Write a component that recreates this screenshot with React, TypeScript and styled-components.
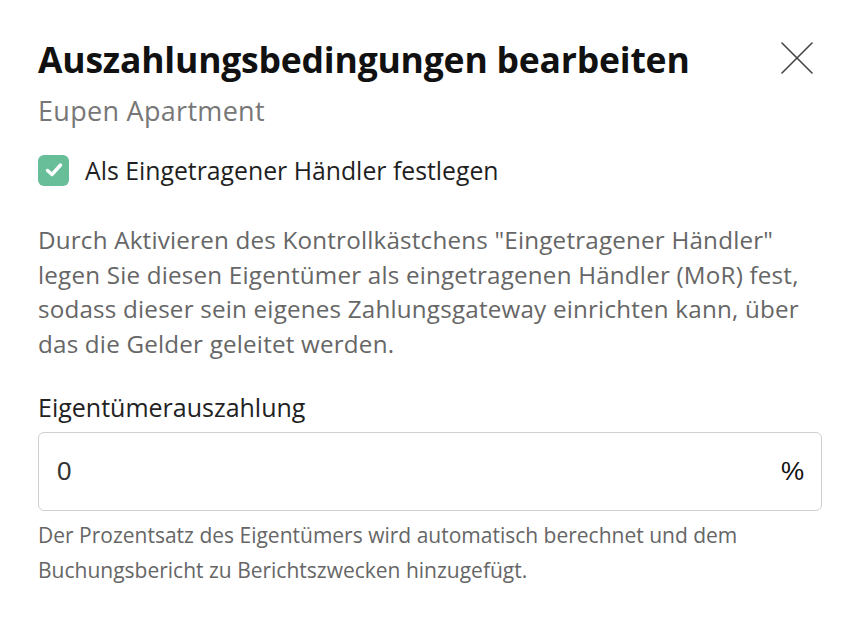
import styled, { createGlobalStyle } from 'styled-components';

const GlobalStyle = createGlobalStyle`
  html, body {
    margin: 0;
    padding: 0;
    background: #fff;
  }
  body {
    font-family: "Open Sans", "Noto Sans", sans-serif;
    color: #1f1f1f;
  }
`;

const description = [
  'Durch Aktivieren des Kontrollkästchens "Eingetragener Händler"',
  'legen Sie diesen Eigentümer als eingetragenen Händler (MoR) fest,',
  'sodass dieser sein eigenes Zahlungsgateway einrichten kann, über',
  'das die Gelder geleitet werden.',
];

const helper = [
  'Der Prozentsatz des Eigentümers wird automatisch berechnet und dem',
  'Buchungsbericht zu Berichtszwecken hinzugefügt.',
];

function App() {
  return (
    <>
      <GlobalStyle />
      <Dialog>
        <Header>
          <Title>Auszahlungsbedingungen bearbeiten</Title>
          <CloseButton aria-label="Schließen">
            <svg width="32" height="32" viewBox="0 0 32 32">
              <path d="M1 1 L31 31 M31 1 L1 31" stroke="#444" strokeWidth="1.6" strokeLinecap="round" />
            </svg>
          </CloseButton>
        </Header>
        <Subtitle>Eupen Apartment</Subtitle>

        <CheckRow>
          <CheckBox>
            <svg width="22" height="22" viewBox="0 0 22 22">
              <path d="M4.5 11.5 L9 15.5 L17.5 6" fill="none" stroke="#fff" strokeWidth="3.4" strokeLinecap="round" strokeLinejoin="round" />
            </svg>
          </CheckBox>
          <CheckLabel>Als Eingetragener Händler festlegen</CheckLabel>
        </CheckRow>

        <Description>
          {description.map((line) => (
            <Line key={line}>{line}</Line>
          ))}
        </Description>

        <Field>
          <FieldLabel>Eigentümerauszahlung</FieldLabel>
          <InputBox>
            <Value>0</Value>
            <Suffix>%</Suffix>
          </InputBox>
          <Helper>
            {helper.map((line) => (
              <Line key={line}>{line}</Line>
            ))}
          </Helper>
        </Field>
      </Dialog>
    </>
  );
}

const Dialog = styled.div`
  width: 858px;
  height: 628px;
  box-sizing: border-box;
  padding: 34px 36px 0 38px;
  display: flex;
  flex-direction: column;
`;

const Header = styled.div`
  display: flex;
  align-items: center;
  justify-content: space-between;
`;

const Title = styled.h1`
  margin: 0;
  font-size: 35.5px;
  font-weight: 700;
  line-height: 50px;
  color: #111;
  letter-spacing: -0.2px;
`;

const CloseButton = styled.button`
  border: none;
  background: none;
  padding: 0 9px 0 0;
  margin-top: -2px;
  display: flex;
  cursor: pointer;
`;

const Subtitle = styled.p`
  margin: 7px 0 0;
  font-size: 27px;
  line-height: 40px;
  color: #777;
  letter-spacing: 0.3px;
`;

const CheckRow = styled.label`
  display: flex;
  align-items: center;
  gap: 16px;
  margin-top: 22px;
`;

const CheckBox = styled.span`
  width: 31px;
  height: 31px;
  flex-shrink: 0;
  border-radius: 6px;
  background: #68be98;
  display: flex;
  align-items: center;
  justify-content: center;
`;

const CheckLabel = styled.span`
  font-size: 24.8px;
  line-height: 34px;
  color: #1f1f1f;
`;

const Description = styled.p`
  margin: 36px 0 0;
  font-size: 24.2px;
  line-height: 34.5px;
  color: #666;
  letter-spacing: 0.2px;
`;

const Line = styled.span`
  display: block;
  white-space: nowrap;
`;

const Field = styled.div`
  margin-top: 29px;
  display: flex;
  flex-direction: column;
`;

const FieldLabel = styled.span`
  font-size: 25px;
  line-height: 34px;
  color: #222;
`;

const InputBox = styled.div`
  margin-top: 8px;
  height: 79px;
  box-sizing: border-box;
  border: 1.5px solid #cfcfcf;
  border-radius: 6px;
  display: flex;
  align-items: center;
  justify-content: space-between;
  padding: 0 17px 0 18px;
  font-family: "Liberation Sans", Arial, sans-serif;
`;

const Value = styled.span`
  font-size: 26px;
  color: #333;
`;

const Suffix = styled.span`
  font-size: 26px;
  color: #111;
`;

const Helper = styled.p`
  margin: 7px 0 0;
  font-size: 21px;
  line-height: 35px;
  color: #666;
`;

export default App;
